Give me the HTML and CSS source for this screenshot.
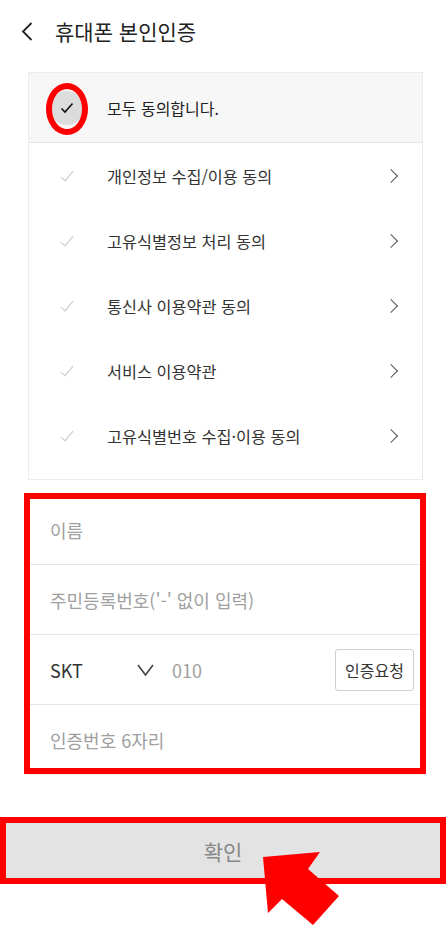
FILE: index.html
```html
<!DOCTYPE html>
<html lang="ko">
<head>
    <meta charset="UTF-8">
    <title>휴대폰 본인인증</title>
    <link rel="stylesheet" href="styles.css">
</head>
<body>
    <div class="page">
        <!-- Шапка -->
        <header class="top-bar">
            <svg class="back" width="12" height="19" viewBox="0 0 12 19">
                <path d="M10.5 1 L2 9.5 L10.5 18" fill="none" stroke="#222" stroke-width="1.8"/>
            </svg>
            <h1 class="title">휴대폰 본인인증</h1>
        </header>

        <!-- Согласия -->
        <div class="agree-box">
            <div class="agree-all">
                <span class="check-circle">
                    <svg width="14" height="12" viewBox="0 0 14 12">
                        <path d="M1.5 6.5 L5 10 L12.5 1.5" fill="none" stroke="#111" stroke-width="1.6"/>
                    </svg>
                </span>
                <span class="agree-all-text">모두 동의합니다.</span>
            </div>
            <ul class="agree-list">
                <li class="agree-item"><span class="check-mark"></span><span class="agree-text">개인정보 수집/이용 동의</span><span class="arrow-right"></span></li>
                <li class="agree-item"><span class="check-mark"></span><span class="agree-text">고유식별정보 처리 동의</span><span class="arrow-right"></span></li>
                <li class="agree-item"><span class="check-mark"></span><span class="agree-text">통신사 이용약관 동의</span><span class="arrow-right"></span></li>
                <li class="agree-item"><span class="check-mark"></span><span class="agree-text">서비스 이용약관</span><span class="arrow-right"></span></li>
                <li class="agree-item"><span class="check-mark"></span><span class="agree-text">고유식별번호 수집·이용 동의</span><span class="arrow-right"></span></li>
            </ul>
        </div>

        <!-- Форма ввода -->
        <form class="auth-form">
            <div class="field"><span class="placeholder">이름</span></div>
            <div class="field"><span class="placeholder">주민등록번호('-' 없이 입력)</span></div>
            <div class="field phone-field">
                <div class="carrier">
                    <span class="carrier-name">SKT</span>
                    <svg width="17" height="12" viewBox="0 0 17 12">
                        <path d="M1 1 L8.5 11 L16 1" fill="none" stroke="#444" stroke-width="1.6"/>
                    </svg>
                </div>
                <span class="placeholder phone-prefix">010</span>
                <button type="button" class="request-btn">인증요청</button>
            </div>
            <div class="field"><span class="placeholder">인증번호 6자리</span></div>
        </form>

        <button type="button" class="confirm-btn">확인</button>

        <!-- Стрелка-указатель -->
        <svg class="pointer" width="82" height="79" viewBox="0 0 82 79">
            <polygon points="3,9 60,4 48,21 79,48 53,77 22,51 8,65" fill="#ff0000"/>
        </svg>
    </div>
</body>
</html>
```

FILE: styles.css
```css
/* Общие стили */
body {
    margin: 0;
    background-color: #fff;
    font-family: "Noto Sans CJK KR", "Noto Sans", sans-serif;
    color: #222;
}

.page {
    position: relative;
    width: 446px;
    height: 927px;
    overflow: hidden;
}

/* Шапка */
.top-bar {
    height: 62px;
    display: flex;
    align-items: center;
    padding-left: 21px;
}

.back {
    margin-top: 1px;
}

.title {
    margin: 0 0 0 22px;
    font-size: 21px;
    font-weight: 400;
    color: #222;
}

/* Блок согласий */
.agree-box {
    margin: 10px 23px 0 28px;
    border: 1px solid #ececec;
}

.agree-all {
    height: 69px;
    display: flex;
    align-items: center;
    padding-left: 21px;
    background-color: #f7f7f7;
    border-bottom: 1px solid #e6e6e6;
}

.check-circle {
    position: relative;
    width: 34px;
    height: 34px;
    border-radius: 50%;
    background-color: #dcdcdc;
    display: flex;
    align-items: center;
    justify-content: center;
}

/* Красный овал вокруг галочки */
.check-circle::after {
    content: "";
    position: absolute;
    left: -4px;
    top: -8px;
    width: 42px;
    height: 52px;
    box-sizing: border-box;
    border: 6px solid #ff0000;
    border-radius: 50%;
}

.agree-all-text {
    margin-left: 23px;
    font-size: 16px;
    color: #222;
}

.agree-list {
    list-style: none;
    margin: 0;
    padding: 0 0 11px 0;
}

.agree-item {
    height: 65px;
    display: flex;
    align-items: center;
    padding: 0 23px 0 21px;
}

.check-mark {
    width: 34px;
    height: 34px;
    position: relative;
}

.check-mark::after {
    content: "";
    position: absolute;
    left: 14px;
    top: 9px;
    width: 5px;
    height: 12px;
    border-right: 1.3px solid #c8c8c8;
    border-bottom: 1.3px solid #c8c8c8;
    transform: rotate(40deg);
}

.agree-text {
    flex: 1;
    margin-left: 23px;
    font-size: 16.3px;
    color: #333;
}

.arrow-right {
    width: 9px;
    height: 9px;
    border-top: 1.5px solid #555;
    border-right: 1.5px solid #555;
    transform: rotate(45deg);
    margin-right: 3px;
}

/* Форма */
.auth-form {
    position: relative;
    margin: 14px 23px 0 28px;
    border: 1px solid #ececec;
}

/* Красная рамка поверх формы */
.auth-form::after {
    content: "";
    position: absolute;
    top: -2px;
    left: -5px;
    right: -4px;
    bottom: 0;
    border: 6px solid #ff0000;
    pointer-events: none;
}

.field {
    height: 69px;
    display: flex;
    align-items: center;
    padding: 0 8px 0 21px;
    border-bottom: 1px solid #e6e6e6;
    font-size: 18px;
}

.field:last-child {
    border-bottom: none;
}

.placeholder {
    color: #a0a0a0;
}

.carrier {
    width: 104px;
    display: flex;
    align-items: center;
    justify-content: space-between;
}

.carrier-name {
    color: #333;
}

.phone-prefix {
    flex: 1;
    margin-left: 18px;
}

.request-btn {
    height: 42px;
    padding: 0 9px;
    border: 1px solid #d0d0d0;
    border-radius: 3px;
    background-color: #fff;
    font-family: inherit;
    font-size: 16px;
    color: #333;
}

/* Кнопка подтверждения */
.confirm-btn {
    position: relative;
    display: block;
    width: 446px;
    height: 67px;
    margin-top: 42px;
    border: none;
    background-color: #e3e3e3;
    font-family: inherit;
    font-size: 21px;
    color: #888;
}

.confirm-btn::after {
    content: "";
    position: absolute;
    inset: 0;
    border: 6px solid #ff0000;
}

.pointer {
    position: absolute;
    left: 260px;
    top: 848px;
}
```
